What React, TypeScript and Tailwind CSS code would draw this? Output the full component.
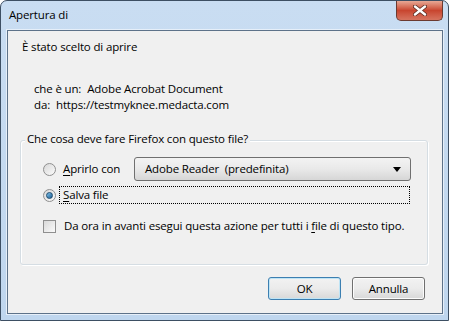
import React from 'react';

function Radio({ checked }: { checked?: boolean }) {
  return (
    <span className="flex h-[13px] w-[13px] shrink-0 items-center justify-center rounded-full border border-[#8f8f8f] bg-gradient-to-br from-[#d8d8d8] to-[#fbfbfb]">
      {checked && (
        <span className="h-[7px] w-[7px] rounded-full border border-[#1b4a6e] bg-gradient-to-br from-[#7fc4ee] to-[#1d5f92]" />
      )}
    </span>
  );
}

export default function App() {
  return (
    <div
      className="relative flex h-[321px] w-[449px] flex-col rounded-t-[7px] border border-[#3d4f63] bg-gradient-to-b from-[#c9ddf2] to-[#bfd6ee] pb-[6px] pl-[6px] pr-[5px] text-[11.5px] leading-[16px] tracking-[-0.15px] text-black"
      style={{ fontFamily: '"Open Sans", "Noto Sans", sans-serif' }}
    >
      {/* Title bar */}
      <div className="flex h-[29px] shrink-0 items-center pl-[2px] pb-[1px]">
        <span>Apertura di</span>
      </div>
      <div className="absolute right-[5px] top-0 flex h-[20px] w-[47px] items-center justify-center rounded-b-[5px] border border-t-0 border-[#6b3a30] bg-gradient-to-b from-[#e7a895] via-[#c8452f] to-[#d6735f]">
        <svg width="14" height="11" viewBox="0 0 14 11">
          <path d="M2 1.5 L12 9.5 M12 1.5 L2 9.5" stroke="#5a2a20" strokeWidth="4" strokeLinecap="round" />
          <path d="M2 1.5 L12 9.5 M12 1.5 L2 9.5" stroke="#ffffff" strokeWidth="2.4" strokeLinecap="round" />
        </svg>
      </div>

      {/* Client area */}
      <div className="flex flex-1 flex-col border border-[#5d7289] bg-[#f0f0f0] shadow-[0_0_0_1px_#e6eff9]">
        <div className="ml-[14px] mt-[8px]">È stato scelto di aprire</div>

        <div className="ml-[26px] mt-[26px] flex flex-col">
          <div className="flex h-[16px] items-center gap-[6px]">
            <span>che è un:</span>
            <span>Adobe Acrobat Document</span>
          </div>
          <div className="flex h-[16px] items-center gap-[6px]">
            <span>da:</span>
            <span>https://testmyknee.medacta.com</span>
          </div>
        </div>

        {/* Group box */}
        <div className="ml-[12px] mr-[14px] mt-[27px] rounded-[3px] border border-[#d5dde3] pb-[30px] pl-[22px] pr-[16px] shadow-[inset_1px_1px_0_#ffffff,1px_1px_0_#ffffff]">
          <div className="-ml-[18px] -mt-[10px] w-fit bg-[#f0f0f0] px-[2px]">
            Che cosa deve fare Firefox con questo file?
          </div>

          <div className="mt-[10px] flex h-[24px] items-center">
            <Radio />
            <span className="ml-[3px] border border-transparent pl-[3px]">
              <span className="underline underline-offset-2">A</span>prirlo con
            </span>
            <div className="ml-auto flex h-[24px] w-[277px] items-center justify-between rounded-[3px] border border-[#707070] bg-gradient-to-b from-[#f3f3f3] via-[#e9e9e9] to-[#d6d6d6] pl-[10px] pr-[9px]">
              <span className="whitespace-pre">Adobe Reader  (predefinita)</span>
              <svg width="8" height="5" viewBox="0 0 8 5">
                <path d="M0 0 H8 L4 5 Z" fill="#000" />
              </svg>
            </div>
          </div>

          <div className="mt-[5px] flex h-[18px] items-center">
            <Radio checked />
            <span className="ml-[3px] mr-[1px] flex h-[18px] flex-1 items-center border border-dotted border-black pl-[3px]">
              <span>
                <span className="underline underline-offset-2">S</span>alva file
              </span>
            </span>
          </div>

          <div className="mt-[14px] flex h-[16px] items-center">
            <span className="h-[13px] w-[13px] shrink-0 border border-[#8f8f8f] bg-gradient-to-br from-[#d9d9d9] to-[#fafafa]" />
            <span className="ml-[8px] whitespace-nowrap">
              Da ora in avanti esegui questa azione per tutti i{' '}
              <span className="underline underline-offset-2">f</span>ile di questo tipo.
            </span>
          </div>
        </div>

        <div className="mr-[17px] mt-[12px] flex justify-end gap-[11px]">
          <button className="h-[23px] w-[73px] rounded-[3px] border border-[#3c7fb1] bg-gradient-to-b from-[#f2f2f2] via-[#ebebeb] to-[#d8d8d8] shadow-[inset_0_0_0_1px_#bfe4f5]">
            OK
          </button>
          <button className="h-[23px] w-[73px] rounded-[3px] border border-[#707070] bg-gradient-to-b from-[#f2f2f2] via-[#ebebeb] to-[#d8d8d8] shadow-[inset_0_0_0_1px_#fcfcfc]">
            Annulla
          </button>
        </div>
      </div>
    </div>
  );
}
